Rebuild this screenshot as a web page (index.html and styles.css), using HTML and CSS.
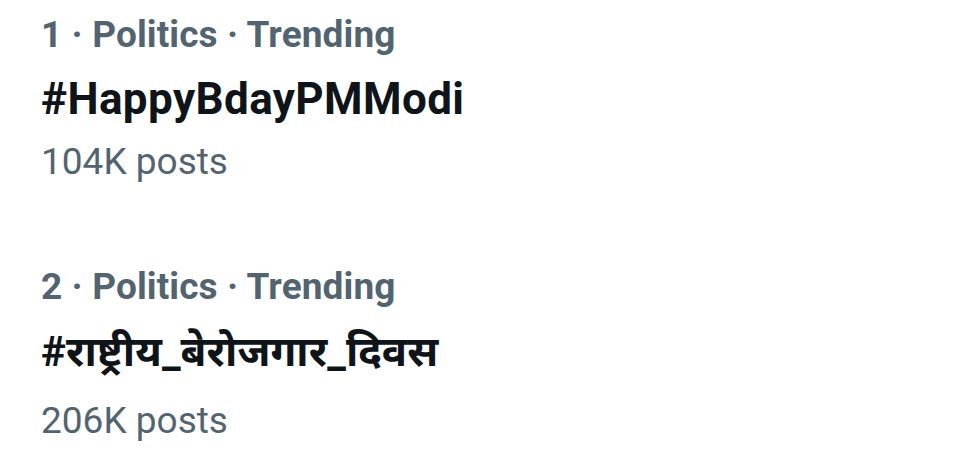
FILE: index.html
```html
<!DOCTYPE html>
<html>
<head>
<meta charset="utf-8">
<link rel="stylesheet" href="styles.css">
</head>
<body>
<div class="list">
  <div class="trend">
    <div class="meta">1 · Politics · Trending</div>
    <div class="tag">#HappyBdayPMModi</div>
    <div class="count">104K posts</div>
  </div>
  <div class="trend">
    <div class="meta">2 · Politics · Trending</div>
    <div class="tag tag-deva">#राष्ट्रीय_बेरोजगार_दिवस</div>
    <div class="count">206K posts</div>
  </div>
</div>
</body>
</html>
```
FILE: styles.css
```css
html, body {
  margin: 0;
  padding: 0;
  background: #ffffff;
}
body {
  font-family: Roboto, "Noto Sans", "Noto Sans Devanagari", sans-serif;
}
.list {
  display: flex;
  flex-direction: column;
  gap: 71px;
  padding: 7px 0 0 41px;
}
.trend {
  display: flex;
  flex-direction: column;
}
.meta {
  color: #536471;
  font-weight: 700;
  font-size: 37px;
  line-height: 56px;
  letter-spacing: 0.1px;
}
.tag {
  color: #0f1419;
  font-weight: 700;
  font-size: 44px;
  line-height: 72px;
  letter-spacing: 0.4px;
}
.tag-deva {
  font-size: 42px;
  line-height: 74px;
  letter-spacing: 0;
  margin-bottom: 5px;
}
.count {
  color: #536471;
  font-weight: 400;
  font-size: 37px;
  line-height: 53px;
}
```
